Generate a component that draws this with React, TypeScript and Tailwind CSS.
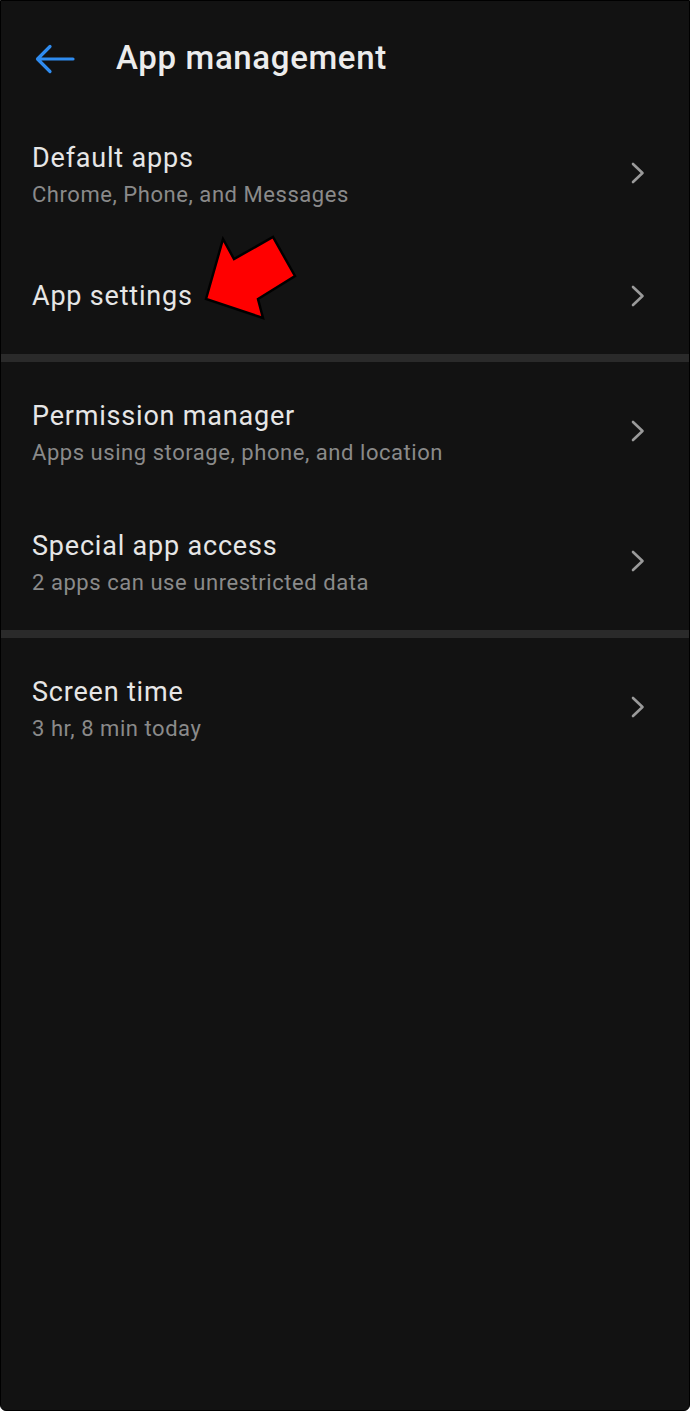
import React from "react";

const Chevron = () => (
  <svg width="16" height="24" viewBox="0 0 16 24" fill="none">
    <path d="M3 3 L12.5 12 L3 21" stroke="#9a9a9a" strokeWidth="2.6" strokeLinecap="round" strokeLinejoin="round" />
  </svg>
);

type RowProps = { title: string; sub?: string; h: string; extra?: React.ReactNode };

const Row = ({ title, sub, h, extra }: RowProps) => (
  <div className={`relative flex items-center justify-between pl-[31px] pr-[43px] ${h}`}>
    <div className="flex flex-col">
      <div className="text-[27px] leading-[30px] tracking-[0.8px] text-[#e6e6e6]">{title}</div>
      {sub && <div className="mt-[8px] text-[22px] leading-[28px] tracking-[0.55px] text-[#8a8a8a]">{sub}</div>}
    </div>
    <div className={sub ? "-mt-[6px]" : ""}>
      <Chevron />
    </div>
    {extra}
  </div>
);

export default function App() {
  return (
    <div
      className="w-[690px] h-[1411px] bg-[#121212] border border-black rounded-b-[6px] overflow-hidden flex flex-col"
      style={{ fontFamily: "Roboto, 'Noto Sans', sans-serif" }}
    >
      <div className="h-[117px] flex items-center pl-[34px] shrink-0">
        <svg width="40" height="30" viewBox="0 0 40 30" fill="none" className="-mt-[2px]">
          <path d="M38 15 H3 M15 2.5 L2.5 15 L15 27.5" stroke="#2f8cf0" strokeWidth="3.2" strokeLinecap="round" strokeLinejoin="round" />
        </svg>
        <div className="ml-[41px] text-[33px] font-medium tracking-[0.65px] text-[#ececec] leading-[40px] -mt-[3px]">App management</div>
      </div>
      <Row title="Default apps" sub="Chrome, Phone, and Messages" h="h-[115px]" />
      <Row
        title="App settings"
        h="h-[121px] pt-[4px]"
        extra={
          <svg className="absolute left-0 top-0" width="690" height="121" viewBox="0 232 690 121">
            <polygon
              points="205,298 222,238 233,258 272,236 294,275 257,298 262,317"
              fill="#ff0000"
              stroke="#000"
              strokeWidth="2.5"
              strokeLinejoin="miter"
            />
          </svg>
        }
      />
      <div className="h-[8px] bg-[#2a2a2a] shrink-0" />
      <div className="h-[7px] shrink-0" />
      <Row title="Permission manager" sub="Apps using storage, phone, and location" h="h-[130px]" />
      <Row title="Special app access" sub="2 apps can use unrestricted data" h="h-[130px]" />
      <div className="h-[1px] shrink-0" />
      <div className="h-[8px] bg-[#2a2a2a] shrink-0" />
      <div className="h-[7px] shrink-0" />
      <Row title="Screen time" sub="3 hr, 8 min today" h="h-[130px]" />
    </div>
  );
}
